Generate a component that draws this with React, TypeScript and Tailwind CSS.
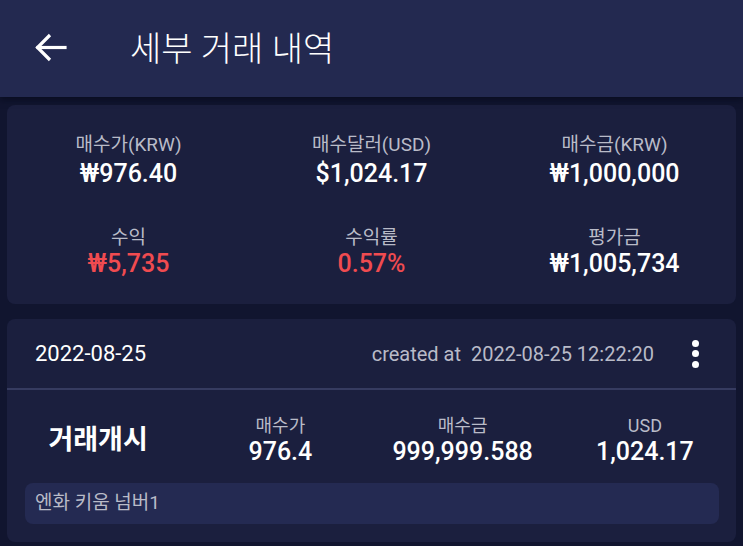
const font = { fontFamily: "Roboto, 'Noto Sans CJK KR', sans-serif" };

type StatProps = { label: string; value: string; red?: boolean; tight?: boolean };

const Stat = ({ label, value, red, tight }: StatProps) => (
  <div className="flex flex-col items-center">
    <span className="text-[19px] leading-[20px] text-[#b9bbc8]">{label}</span>
    <span
      className={`text-[25px] leading-[26px] font-medium ${tight ? 'mt-[3px]' : 'mt-[6px]'} ${
        red ? 'text-[#f04b50]' : 'text-white'
      }`}
    >
      {value}
    </span>
  </div>
);

const TradeStat = ({ label, value }: { label: string; value: string }) => (
  <div className="flex flex-col items-center">
    <span className="text-[18px] leading-[22px] text-[#b9bbc8]">{label}</span>
    <span className="text-[25px] leading-[30px] font-medium text-white">{value}</span>
  </div>
);

const App = () => {
  return (
    <div className="w-[743px] h-[546px] overflow-hidden bg-[#11152f]" style={font}>
      <header className="h-[97px] bg-[#232950] flex items-center shadow-[0_3px_6px_rgba(5,8,25,0.6)] relative z-10">
        <svg
          className="ml-[34px]"
          width="34"
          height="34"
          viewBox="0 0 34 34"
          fill="none"
          stroke="white"
          strokeWidth="3.2"
          strokeLinecap="square"
        >
          <path d="M31 15.5H4" />
          <path d="M16 3L3.5 15.5L16 28" strokeLinecap="butt" />
        </svg>
        <h1 className="ml-[62px] text-[34px] leading-none text-white font-light">
          세부 거래 내역
        </h1>
      </header>

      <main className="px-[7px] pt-[8px] flex flex-col gap-[15px]">
        <section className="rounded-lg bg-[#1b1f3e] pt-[30px] pb-[27px]">
          <div className="grid grid-cols-3">
            <Stat label="매수가(KRW)" value="₩976.40" />
            <Stat label="매수달러(USD)" value="$1,024.17" />
            <Stat label="매수금(KRW)" value="₩1,000,000" />
          </div>
          <div className="grid grid-cols-3 mt-[41px]">
            <Stat label="수익" value="₩5,735" red tight />
            <Stat label="수익률" value="0.57%" red tight />
            <Stat label="평가금" value="₩1,005,734" tight />
          </div>
        </section>

        <section className="rounded-lg bg-[#1b1f3e] pb-[18px]">
          <div className="h-[69px] flex items-center pl-[28px] pr-[37px]">
            <span className="text-[22px] text-white">2022-08-25</span>
            <span className="ml-auto text-[20px] text-[#b9bbc8]">
              created at&nbsp; 2022-08-25 12:22:20
            </span>
            <div className="ml-[38px] flex flex-col gap-[3.5px]">
              <span className="w-[7px] h-[7px] rounded-full bg-white" />
              <span className="w-[7px] h-[7px] rounded-full bg-white" />
              <span className="w-[7px] h-[7px] rounded-full bg-white" />
            </div>
          </div>
          <div className="h-[2px] bg-[#363b60]" />
          <div className="grid grid-cols-4 items-center h-[93px] pt-[8px]">
            <div className="flex justify-center">
              <span className="text-[27px] font-bold text-white">거래개시</span>
            </div>
            <TradeStat label="매수가" value="976.4" />
            <TradeStat label="매수금" value="999,999.588" />
            <TradeStat label="USD" value="1,024.17" />
          </div>
          <div className="ml-[18px] mr-[17px] h-[41px] rounded-lg bg-[#242a52] flex items-center px-[10px]">
            <span className="text-[19px] text-[#b9bbc8]">엔화 키움 넘버1</span>
          </div>
        </section>
      </main>
    </div>
  );
};

export default App;
